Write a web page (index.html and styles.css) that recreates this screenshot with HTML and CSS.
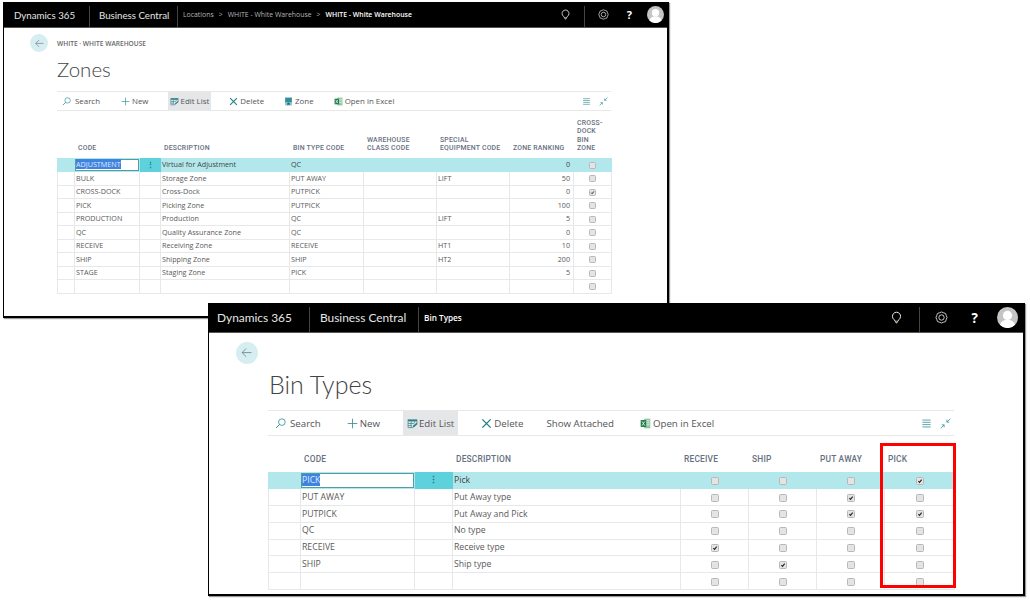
FILE: index.html
```html
<!DOCTYPE html>
<html lang="en">
<head>
  <meta charset="UTF-8" />
  <title>Zones and Bin Types</title>
  <link rel="stylesheet" href="styles.css">
</head>
<body>
  <svg class="defs" width="0" height="0">
    <symbol id="i-back" viewBox="0 0 16 16"><path d="M14 8H2.500M7.500 3 2.500 8l5 5" fill="none" stroke="#6f7f85" stroke-width="1"/></symbol>
    <symbol id="i-search" viewBox="0 0 16 16"><circle cx="10" cy="6" r="4.800" fill="none" stroke="#2f8f9a" stroke-width="1.200"/><path d="M6.500 9.500 1.500 14.500" stroke="#2f8f9a" stroke-width="1.400"/></symbol>
    <symbol id="i-plus" viewBox="0 0 16 16"><path d="M8 1v14M1 8h14" stroke="#2f8f9a" stroke-width="1.200"/></symbol>
    <symbol id="i-edit" viewBox="0 0 16 16"><path d="M1 2h14v3H1z" fill="#2f8088"/><path d="M1.500 5v9h7M6 5v9M1.500 8h9M1.500 11h5M11 5v2M14.500 5v3" fill="none" stroke="#2f8088" stroke-width="1"/><path d="M8 14l1-3 5-4 1.500 1.600-5 4.400z" fill="#2f8088"/></symbol>
    <symbol id="i-x" viewBox="0 0 16 16"><path d="M2 2l12 12M14 2 2 14" stroke="#1f7f8c" stroke-width="2"/></symbol>
    <symbol id="i-zone" viewBox="0 0 16 16"><path d="M2 1h12v9H2z" fill="#2f8f9a"/><path d="M2 10h12v5H2z" fill="#8fc4c9"/><path d="M6 10h4v5L8 13.500 6 15z" fill="#1d6a74"/></symbol>
    <symbol id="i-excel" viewBox="0 0 16 16"><path d="M6 1h9v14H6z" fill="#8cc6a2"/><path d="M9 4h5M9 7h5M9 10h5" stroke="#fff" stroke-width="1"/><path d="M1 3h8v10H1z" fill="#1e7a45"/><path d="M3 5l4 6M7 5l-4 6" stroke="#fff" stroke-width="1.200"/></symbol>
    <symbol id="i-list" viewBox="0 0 16 16"><path d="M2 3h12M2 6.300h12M2 9.600h12M2 13h12" stroke="#4f9aa3" stroke-width="1.300"/></symbol>
    <symbol id="i-collapse" viewBox="0 0 16 16"><path d="M15 1 10 6M10 2.500V6h3.500M1 15l5-5M2.500 10H6v3.500" fill="none" stroke="#2f9aa6" stroke-width="1.200"/></symbol>
    <symbol id="i-bulb" viewBox="0 0 16 16"><path d="M8 15 5 10.500A5 5 0 1 1 11 10.500z" fill="none" stroke="#eee" stroke-width="1.200"/><path d="M6.500 12.500h3" stroke="#d9b36a" stroke-width="1"/></symbol>
    <symbol id="i-gear" viewBox="0 0 16 16"><path d="M8 1.200 10.500 2.200 13 3 13.800 5.500 14.800 8 13.800 10.500 13 13 10.500 13.800 8 14.800 5.500 13.800 3 13 2.200 10.500 1.200 8 2.200 5.500 3 3 5.500 2.200z" fill="none" stroke="#ddd" stroke-width="1.100"/><circle cx="8" cy="8" r="3.300" fill="none" stroke="#ddd" stroke-width="1.100"/></symbol>
    <symbol id="i-user" viewBox="0 0 20 20"><circle cx="10" cy="10" r="10" fill="#c4c4c4"/><circle cx="10" cy="8" r="4.400" fill="#fff"/><path d="M2.800 17c1-3.300 3.800-4.800 7.200-4.800s6.200 1.500 7.200 4.800a10 10 0 0 1-14.400 0z" fill="#fff"/></symbol>
    <symbol id="i-check" viewBox="0 0 10 10"><path d="M2.300 5.300 4.200 7.400 7.800 2.800" fill="none" stroke="#222" stroke-width="1.900"/></symbol>
  </svg>

  <!-- Zones window -->
  <section class="win zones">
    <header class="topbar">
      <div class="product">Dynamics 365</div>
      <div class="app">Business Central</div>
      <div class="crumbs">
        <span>Locations</span><i>&gt;</i><span>WHITE - White Warehouse</span><i>&gt;</i><b>WHITE - White Warehouse</b>
      </div>
      <div class="tools">
        <svg class="ico bulb"><use href="#i-bulb"/></svg>
        <span class="tools-sep"></span>
        <svg class="ico gear"><use href="#i-gear"/></svg>
        <span class="help">?</span>
        <svg class="avatar"><use href="#i-user"/></svg>
      </div>
    </header>
    <div class="page">
      <div class="backrow">
        <span class="back"><svg class="ico"><use href="#i-back"/></svg></span>
        <span class="caption">WHITE · WHITE WAREHOUSE</span>
      </div>
      <h1>Zones</h1>
      <div class="toolbar">
        <span class="btn btn-search"><svg class="ico"><use href="#i-search"/></svg>Search</span>
        <span class="btn btn-new"><svg class="ico"><use href="#i-plus"/></svg>New</span>
        <span class="btn active"><svg class="ico"><use href="#i-edit"/></svg>Edit List</span>
        <span class="btn btn-delete"><svg class="ico"><use href="#i-x"/></svg>Delete</span>
        <span class="btn"><svg class="ico"><use href="#i-zone"/></svg>Zone</span>
        <span class="btn btn-excel"><svg class="ico"><use href="#i-excel"/></svg>Open in Excel</span>
        <span class="toolbar-right">
          <svg class="ico"><use href="#i-list"/></svg>
          <svg class="ico"><use href="#i-collapse"/></svg>
        </span>
      </div>
      <table class="grid">
        <colgroup>
          <col class="c-17"><col class="c-65"><col class="c-21"><col class="c-129"><col class="c-74"><col class="c-73"><col class="c-73"><col class="c-64"><col class="c-38">
        </colgroup>
        <thead>
          <tr><th></th><th>CODE</th><th></th><th>DESCRIPTION</th><th>BIN TYPE CODE</th><th>WAREHOUSE<br>CLASS CODE</th><th>SPECIAL<br>EQUIPMENT CODE</th><th class="nowrap">ZONE RANKING</th><th>CROSS-<br>DOCK<br>BIN<br>ZONE</th></tr>
        </thead>
        <tbody>
          <tr class="current"><td></td><td class="editing"><span class="sel">ADJUSTMENT</span></td><td class="dots">⋮</td><td>Virtual for Adjustment</td><td>QC</td><td></td><td></td><td class="num">0</td><td class="mid"><span class="cb"></span></td></tr>
          <tr><td></td><td>BULK</td><td></td><td>Storage Zone</td><td>PUT AWAY</td><td></td><td>LIFT</td><td class="num">50</td><td class="mid"><span class="cb"></span></td></tr>
          <tr><td></td><td>CROSS-DOCK</td><td></td><td>Cross-Dock</td><td>PUTPICK</td><td></td><td></td><td class="num">0</td><td class="mid"><span class="cb"><svg><use href="#i-check"/></svg></span></td></tr>
          <tr><td></td><td>PICK</td><td></td><td>Picking Zone</td><td>PUTPICK</td><td></td><td></td><td class="num">100</td><td class="mid"><span class="cb"></span></td></tr>
          <tr><td></td><td>PRODUCTION</td><td></td><td>Production</td><td>QC</td><td></td><td>LIFT</td><td class="num">5</td><td class="mid"><span class="cb"></span></td></tr>
          <tr><td></td><td>QC</td><td></td><td>Quality Assurance Zone</td><td>QC</td><td></td><td></td><td class="num">0</td><td class="mid"><span class="cb"></span></td></tr>
          <tr><td></td><td>RECEIVE</td><td></td><td>Receiving Zone</td><td>RECEIVE</td><td></td><td>HT1</td><td class="num">10</td><td class="mid"><span class="cb"></span></td></tr>
          <tr><td></td><td>SHIP</td><td></td><td>Shipping Zone</td><td>SHIP</td><td></td><td>HT2</td><td class="num">200</td><td class="mid"><span class="cb"></span></td></tr>
          <tr><td></td><td>STAGE</td><td></td><td>Staging Zone</td><td>PICK</td><td></td><td></td><td class="num">5</td><td class="mid"><span class="cb"></span></td></tr>
          <tr><td></td><td></td><td></td><td></td><td></td><td></td><td></td><td></td><td class="mid"><span class="cb"></span></td></tr>
        </tbody>
      </table>
    </div>
  </section>

  <!-- Bin Types window -->
  <section class="win bins">
    <header class="topbar">
      <div class="product">Dynamics 365</div>
      <div class="app">Business Central</div>
      <div class="crumbs"><b>Bin Types</b></div>
      <div class="tools">
        <svg class="ico bulb"><use href="#i-bulb"/></svg>
        <span class="tools-sep"></span>
        <svg class="ico gear"><use href="#i-gear"/></svg>
        <span class="help">?</span>
        <svg class="avatar"><use href="#i-user"/></svg>
      </div>
    </header>
    <div class="page">
      <div class="backrow">
        <span class="back"><svg class="ico"><use href="#i-back"/></svg></span>
      </div>
      <h1>Bin Types</h1>
      <div class="toolbar">
        <span class="btn btn-search"><svg class="ico"><use href="#i-search"/></svg>Search</span>
        <span class="btn btn-new"><svg class="ico"><use href="#i-plus"/></svg>New</span>
        <span class="btn active"><svg class="ico"><use href="#i-edit"/></svg>Edit List</span>
        <span class="btn btn-delete"><svg class="ico"><use href="#i-x"/></svg>Delete</span>
        <span class="btn btn-show">Show Attached</span>
        <span class="btn btn-excel"><svg class="ico"><use href="#i-excel"/></svg>Open in Excel</span>
        <span class="toolbar-right">
          <svg class="ico"><use href="#i-list"/></svg>
          <svg class="ico"><use href="#i-collapse"/></svg>
        </span>
      </div>
      <table class="grid">
        <colgroup>
          <col class="c-32"><col class="c-114"><col class="c-38"><col class="c-228"><col class="c-68"><col class="c-68"><col class="c-68"><col class="c-70">
        </colgroup>
        <thead>
          <tr><th></th><th>CODE</th><th></th><th>DESCRIPTION</th><th>RECEIVE</th><th>SHIP</th><th>PUT AWAY</th><th>PICK</th></tr>
        </thead>
        <tbody>
          <tr class="current"><td></td><td class="editing"><span class="sel">PICK</span></td><td class="dots">⋮</td><td>Pick</td><td class="mid"><span class="cb"></span></td><td class="mid"><span class="cb"></span></td><td class="mid"><span class="cb"></span></td><td class="mid"><span class="cb"><svg><use href="#i-check"/></svg></span></td></tr>
          <tr><td></td><td>PUT AWAY</td><td></td><td>Put Away type</td><td class="mid"><span class="cb"></span></td><td class="mid"><span class="cb"></span></td><td class="mid"><span class="cb"><svg><use href="#i-check"/></svg></span></td><td class="mid"><span class="cb"></span></td></tr>
          <tr><td></td><td>PUTPICK</td><td></td><td>Put Away and Pick</td><td class="mid"><span class="cb"></span></td><td class="mid"><span class="cb"></span></td><td class="mid"><span class="cb"><svg><use href="#i-check"/></svg></span></td><td class="mid"><span class="cb"><svg><use href="#i-check"/></svg></span></td></tr>
          <tr><td></td><td>QC</td><td></td><td>No type</td><td class="mid"><span class="cb"></span></td><td class="mid"><span class="cb"></span></td><td class="mid"><span class="cb"></span></td><td class="mid"><span class="cb"></span></td></tr>
          <tr><td></td><td>RECEIVE</td><td></td><td>Receive type</td><td class="mid"><span class="cb"><svg><use href="#i-check"/></svg></span></td><td class="mid"><span class="cb"></span></td><td class="mid"><span class="cb"></span></td><td class="mid"><span class="cb"></span></td></tr>
          <tr><td></td><td>SHIP</td><td></td><td>Ship type</td><td class="mid"><span class="cb"></span></td><td class="mid"><span class="cb"><svg><use href="#i-check"/></svg></span></td><td class="mid"><span class="cb"></span></td><td class="mid"><span class="cb"></span></td></tr>
          <tr><td></td><td></td><td></td><td></td><td class="mid"><span class="cb"></span></td><td class="mid"><span class="cb"></span></td><td class="mid"><span class="cb"></span></td><td class="mid"><span class="cb"></span></td></tr>
        </tbody>
      </table>
    </div>
    <div class="callout"></div>
  </section>
</body>
</html>
```

FILE: styles.css
```css
html, body {
  margin: 0;
  height: 100%;
  background: #fff;
  overflow: hidden;
}
body {
  position: relative;
  font-family: "Open Sans", "Noto Sans", Arial, sans-serif;
  color: #5a5a5a;
}
.defs {
  position: absolute;
}

/* windows sit on a free canvas */
.win {
  position: absolute;
  box-sizing: border-box;
  background: #fff;
  border: solid #000;
  display: flex;
  flex-direction: column;
  box-shadow: 1px 1px 1px #999;
}
.zones {
  left: 3px;
  top: 2px;
  width: 666px;
  height: 316px;
  border-width: 0 2px 2px 1px;
  --bar: 26px;
  --bar-font: 9.7px;
  --crumb-font: 6.9px;
  --ui-font: 7.9px;
  --th-font: 6.9px;
  --td-font: 7.2px;
  --ico: 9px;
  --cb: 7px;
  --row: 13.5px;
}
.bins {
  left: 208px;
  top: 303px;
  width: 817px;
  height: 293px;
  border-width: 0 2px 2px 1px;
  --bar: 30px;
  --bar-font: 11.9px;
  --crumb-font: 8.2px;
  --ui-font: 9.7px;
  --th-font: 8.4px;
  --td-font: 8.7px;
  --ico: 11px;
  --cb: 8px;
  --row: 16.8px;
}

/* black top bar */
.topbar {
  display: flex;
  align-items: stretch;
  flex: none;
  box-sizing: border-box;
  height: var(--bar);
  background: #000;
  border-bottom: 1px solid #555;
  color: #e6e6e6;
  font-size: var(--bar-font);
}
.product, .app {
  display: flex;
  align-items: center;
  font-family: Lato, "Open Sans", sans-serif;
  white-space: nowrap;
  border-right: 1px solid #444;
  margin-top: 4px;
  padding-bottom: 4px;
}
.zones .product { width: 75px; padding-left: 10px; }
.zones .app { width: 78px; padding-left: 9px; }
.bins .product { width: 92px; padding-left: 8px; }
.bins .app { width: 98px; padding-left: 10px; }
.crumbs {
  display: flex;
  align-items: center;
  gap: 5px;
  padding-left: 5px;
  font-size: var(--crumb-font);
  color: #b5b5b5;
}
.crumbs b {
  color: #fff;
  font-weight: 600;
}
.crumbs i {
  font-style: normal;
}
.tools {
  display: flex;
  align-items: center;
  margin-left: auto;
}
.tools .ico {
  width: calc(var(--ico) + 2px);
  height: calc(var(--ico) + 2px);
}
.tools-sep {
  width: 1px;
  align-self: stretch;
  margin-top: 4px;
  background: #444;
}
.help {
  color: #fff;
  font-weight: 700;
  font-family: "Open Sans", sans-serif;
}
.avatar {
  flex: none;
}
.zones .help { font-size: 11px; }
.bins .help { font-size: 13.4px; }
.zones .bulb { margin-right: 13px; }
.zones .gear { margin: 0 18px 0 13px; }
.zones .help { margin-right: 15px; }
.zones .avatar { width: 17px; height: 17px; margin-right: 3px; }
.bins .bulb { margin-right: 16px; }
.bins .gear { margin: 0 24px 0 15px; }
.bins .help { margin-right: 19px; }
.bins .avatar { width: 21px; height: 21px; margin-right: 5px; }

/* page head */
.zones .page { padding: 6px 0 0 53px; }
.bins .page { padding: 9px 0 0 59px; }
.backrow {
  display: flex;
  align-items: center;
}
.back {
  display: flex;
  align-items: center;
  justify-content: center;
  border-radius: 50%;
  background: #d6eef1;
}
.zones .back { width: 18px; height: 18px; margin-left: -27px; margin-right: 9px; }
.bins .back { width: 22px; height: 22px; margin-left: -32px; }
.back .ico {
  width: 60%;
  height: 60%;
}
.caption {
  font-size: 6.6px;
  font-weight: 600;
  color: #666;
}
h1 {
  font-family: Lato, "Open Sans", sans-serif;
  font-weight: 300;
  color: #444;
  margin: 0;
}
.zones h1 { font-size: 20.5px; line-height: 29px; margin-top: 3px; margin-bottom: 7px; }
.bins h1 { font-size: 25px; line-height: 36px; margin: 2px 0 8px 1px; }

/* action bar */
.toolbar {
  display: flex;
  align-items: stretch;
  box-sizing: border-box;
  border-top: 1px solid #e8e8e8;
  border-bottom: 1px solid #e8e8e8;
  font-size: var(--ui-font);
  color: #555;
}
.zones .toolbar { width: 554px; height: 20px; padding-left: 5px; gap: 20px; }
.bins .toolbar { width: 686px; height: 26px; padding-left: 7px; gap: 24px; }
.btn {
  display: flex;
  align-items: center;
  white-space: nowrap;
}
.btn .ico {
  flex: none;
  width: var(--ico);
  height: var(--ico);
  margin-right: 2px;
}
.btn-search .ico { margin-right: 4px; }
.bins .btn .ico { margin-right: 3px; }
.bins .btn-search .ico { margin-right: 4px; }
.bins .btn-new .ico, .bins .btn-delete .ico, .bins .btn-excel .ico { margin-right: 2px; }
.bins .active .ico { margin-right: 1px; }
.btn-new {
  margin-left: 1px;
}
.bins .btn-new {
  margin-left: 2px;
}
.bins .btn-show {
  margin: 0 2px 0 -1px;
}
.active {
  background: #e4e6e8;
}
.zones .active { margin: 0 -2px 0 -1px; padding: 0 2px; }
.bins .active { margin: 0 -1px; padding: 0 4px; }
.toolbar-right {
  display: flex;
  align-items: center;
  margin-left: auto;
  gap: 8px;
  padding-right: 3px;
}
.toolbar-right .ico {
  width: var(--ico);
  height: var(--ico);
}

/* grids */
.grid {
  border-collapse: collapse;
  table-layout: fixed;
}
.zones .grid { width: 554px; }
.bins .grid { width: 686px; }
.c-17 { width: 17px; }
.c-65 { width: 65px; }
.c-21 { width: 21px; }
.c-129 { width: 129px; }
.c-74 { width: 74px; }
.c-73 { width: 73px; }
.c-64 { width: 64px; }
.c-38 { width: 38px; }
.c-32 { width: 32px; }
.c-114 { width: 114px; }
.c-228 { width: 228px; }
.c-68 { width: 68px; }
.c-70 { width: 70px; }
th {
  font-family: Roboto, "Liberation Sans", sans-serif;
  font-weight: 500;
  font-size: var(--th-font);
  line-height: 1.22;
  letter-spacing: .2px;
  color: #667080;
  text-align: left;
  vertical-align: bottom;
  padding: 0 2px 5px 3.5px;
}
.zones thead tr { height: 47px; }
.bins thead tr { height: 36px; }
.bins th { padding-bottom: 7px; }
.nowrap {
  white-space: nowrap;
}
td {
  height: var(--row);
  padding: 0 1px;
  box-sizing: border-box;
  border: 1px solid #e6e8ea;
  font-size: var(--td-font);
  line-height: 1;
  white-space: nowrap;
  overflow: hidden;
}
.num {
  text-align: right;
  padding-right: 3px;
}
.mid {
  text-align: center;
}
.current td {
  background: #b2e8ec;
  border-color: #b2e8ec;
  color: #444;
}
.current .editing {
  background: #fff;
  box-shadow: inset 0 0 0 1px #4f9da6;
}
.current .dots {
  background: #5dd2dc;
  border-color: #5dd2dc;
  color: #2b6f77;
  text-align: center;
  font-weight: 700;
}
.sel {
  background: #3f82e0;
  color: #dfeaff;
}
.cb {
  display: inline-block;
  box-sizing: border-box;
  width: var(--cb);
  height: var(--cb);
  vertical-align: middle;
  background: #e4e4e4;
  border: 1px solid #b8b8b8;
  border-radius: 1.5px;
}
.cb svg {
  display: block;
  width: 100%;
  height: 100%;
}

/* red highlight drawn over the PICK column */
.callout {
  position: absolute;
  left: 671px;
  top: 140px;
  width: 76px;
  height: 145px;
  box-sizing: border-box;
  border: 3px solid #f00;
}
```
